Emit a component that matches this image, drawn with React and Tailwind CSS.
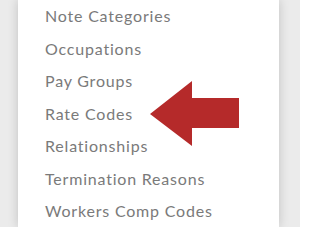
const items = [
  "Note Categories",
  "Occupations",
  "Pay Groups",
  "Rate Codes",
  "Relationships",
  "Termination Reasons",
  "Workers Comp Codes",
];

export default function App() {
  return (
    <div className="w-[300px] h-[227px] overflow-hidden bg-[#ebebeb] pl-[18px] pr-[21px]">
      <div
        className="relative h-full bg-white shadow-[0_0_10px_rgba(0,0,0,0.18)] pl-[27px]"
        style={{ fontFamily: 'Lato, "Liberation Sans", sans-serif' }}
      >
        <ul>
          {items.map((label) => (
            <li
              key={label}
              className="h-[32.5px] leading-[32.5px] text-[16px] text-[#7a7a7a] tracking-[0.8px] whitespace-nowrap"
            >
              {label}
            </li>
          ))}
        </ul>

        {/* pointer arrow */}
        <svg
          className="absolute left-[132px] top-[81px]"
          width="89"
          height="65"
          viewBox="0 0 89 65"
        >
          <polygon
            points="0,33 42,0 42,17 89,17 89,47 42,47 42,65"
            fill="#b52a2a"
          />
        </svg>
      </div>
    </div>
  );
}
